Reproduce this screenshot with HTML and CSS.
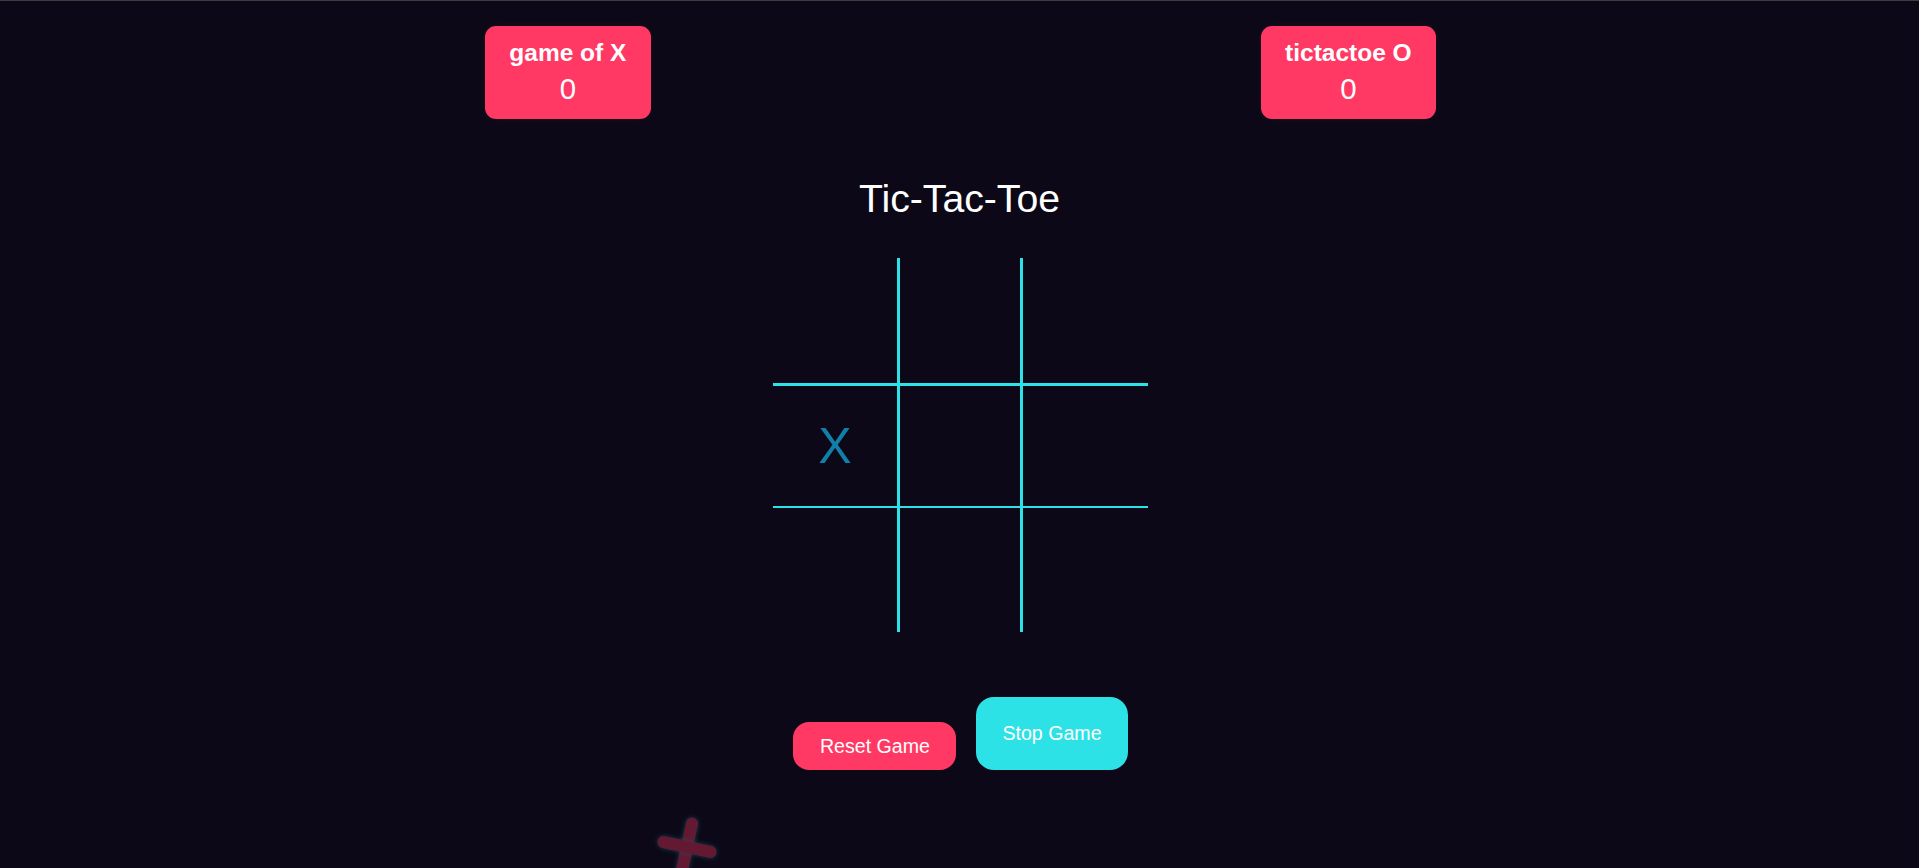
FILE: index.html
```html
<!DOCTYPE html>
<html lang="en">
<head>
<meta charset="utf-8">
<title>Tic-Tac-Toe</title>
<link rel="stylesheet" href="styles.css">
</head>
<body>
  <div class="scoreboard">
    <div class="score-card">
      <div class="score-name">game of X</div>
      <div class="score-value">0</div>
    </div>
    <div class="score-card">
      <div class="score-name">tictactoe O</div>
      <div class="score-value">0</div>
    </div>
  </div>

  <main class="game">
    <h1 class="title">Tic-Tac-Toe</h1>
    <div class="board">
      <div class="cell"></div>
      <div class="cell"></div>
      <div class="cell"></div>
      <div class="cell mark-x">X</div>
      <div class="cell"></div>
      <div class="cell"></div>
      <div class="cell"></div>
      <div class="cell"></div>
      <div class="cell"></div>
    </div>
    <div class="controls">
      <button class="btn btn-reset">Reset Game</button>
      <button class="btn btn-stop">Stop Game</button>
    </div>
  </main>

  <div class="floating-cross" aria-hidden="true">
    <span class="bar bar-v"></span>
    <span class="bar bar-h"></span>
  </div>
</body>
</html>
```

FILE: styles.css
```css
html, body {
  height: 100%;
}

body {
  margin: 0;
  background: #0c0817;
  border-top: 1px solid #3e3e40;
  box-sizing: border-box;
  font-family: "Liberation Sans", Arial, sans-serif;
  color: #ffffff;
  overflow: hidden;
  position: relative;
}

.scoreboard {
  width: 1561px;
  margin: 0 auto;
  padding-top: 25px;
  padding-left: 2px;
  display: flex;
  justify-content: space-around;
  align-items: flex-start;
}

.score-card {
  background: #ff3864;
  border-radius: 11px;
  padding: 12.5px 24.5px 13px;
  text-align: center;
  box-shadow: 0 0 12px rgba(255, 255, 255, 0.035);
}

.score-name {
  font-size: 24.5px;
  font-weight: 700;
  line-height: 28px;
}

.score-value {
  margin-top: 5.5px;
  font-size: 29.4px;
  line-height: 34px;
}

.game {
  display: flex;
  flex-direction: column;
  align-items: center;
}

.title {
  margin: 57px 0 0;
  font-size: 39.2px;
  font-weight: 400;
  line-height: 45px;
}

.board {
  margin-top: 37px;
  margin-left: 2px;
  display: grid;
  grid-template-columns: 124px 120px 125px;
  grid-template-rows: 125px 120px 124px;
  column-gap: 3px;
  row-gap: 2.5px;
  background: #2de2e6;
}

.cell {
  background: #0c0817;
  display: flex;
  align-items: center;
  justify-content: center;
}

.mark-x {
  color: #1080ab;
  font-size: 50px;
  line-height: 1;
}

.controls {
  margin-top: 65px;
  margin-left: 2px;
  display: flex;
  align-items: flex-end;
  gap: 20px;
}

.btn {
  border: none;
  color: #ffffff;
  font-family: "Liberation Sans", Arial, sans-serif;
  font-size: 19.6px;
  line-height: 23px;
  cursor: pointer;
}

.btn-reset {
  background: #ff3864;
  padding: 12.5px 26.5px;
  border-radius: 16px;
}

.btn-stop {
  background: #2de2e6;
  padding: 25px 26px;
  border-radius: 18px;
}

.floating-cross {
  position: absolute;
  left: 657px;
  top: 816px;
  width: 60px;
  height: 60px;
  transform: rotate(12deg);
  opacity: 0.36;
}

.bar {
  position: absolute;
  background: #ff3864;
  border-radius: 6px;
  box-shadow: 0 0 5px rgba(45, 226, 230, 0.7);
}

.bar-v {
  left: 24px;
  top: 0;
  width: 12px;
  height: 60px;
}

.bar-h {
  left: 0;
  top: 24px;
  width: 60px;
  height: 12px;
}
```
